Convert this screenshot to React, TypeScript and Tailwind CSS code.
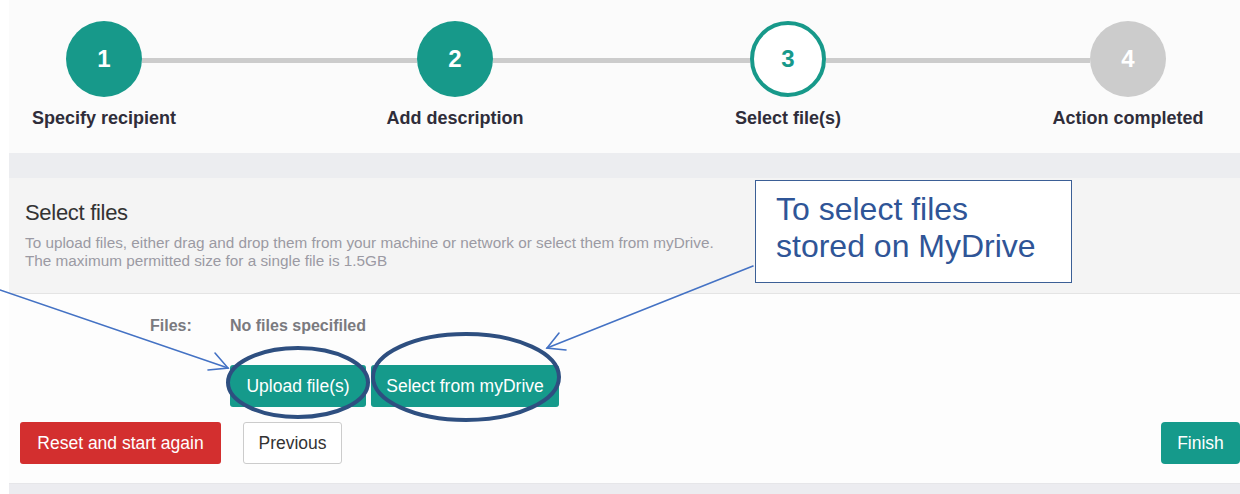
import React from "react";

type StepState = "done" | "current" | "todo";

const steps: { n: number; label: string; state: StepState }[] = [
  { n: 1, label: "Specify recipient", state: "done" },
  { n: 2, label: "Add description", state: "done" },
  { n: 3, label: "Select file(s)", state: "current" },
  { n: 4, label: "Action completed", state: "todo" },
];

// widths of the connector bars between consecutive step circles
const connectorWidths = ["w-[275px]", "w-[257px]", "w-[264px]"];

function StepCircle({ n, state }: { n: number; state: StepState }) {
  const base =
    "w-[76px] h-[76px] rounded-full flex items-center justify-center text-[24px] font-bold";
  if (state === "done") {
    return <div className={`${base} bg-[#17998a] text-white`}>{n}</div>;
  }
  if (state === "current") {
    return (
      <div className={`${base} bg-white border-[4px] border-[#17998a] text-[#17998a]`}>
        {n}
      </div>
    );
  }
  return <div className={`${base} bg-[#cccccc] text-white`}>{n}</div>;
}

function Stepper() {
  return (
    <div className="h-[153px] bg-[#fbfbfb] pt-[21px] pl-[57px]">
      <div className="flex items-start">
        {steps.map((s, i) => (
          <React.Fragment key={s.n}>
            <div className="w-[76px] flex flex-col items-center">
              <StepCircle n={s.n} state={s.state} />
              <div className="mt-[10px] whitespace-nowrap text-[18px] leading-[22px] font-bold text-[#2f2d3a]">
                {s.label}
              </div>
            </div>
            {i < connectorWidths.length && (
              <div className={`${connectorWidths[i]} h-[5px] mt-[37px] bg-[#cccccc]`} />
            )}
          </React.Fragment>
        ))}
      </div>
    </div>
  );
}

function Overlay() {
  return (
    <svg
      className="absolute inset-0 pointer-events-none"
      width={1240}
      height={494}
      viewBox="0 0 1240 494"
    >
      {/* arrow towards the upload button */}
      <g stroke="#4472c4" strokeWidth={1.6} fill="none" strokeLinecap="round">
        <line x1={0} y1={290} x2={228} y2={368} />
        <polyline points="215,353 228,368 208,370" />
        {/* arrow from the note towards the myDrive button */}
        <line x1={753} y1={266} x2={547} y2={348} />
        <polyline points="559,333 547,348 566,350" />
      </g>
      {/* rings around the two file buttons */}
      <g stroke="#2e4f80" strokeWidth={4} fill="none">
        <ellipse cx={298} cy={382.5} rx={70} ry={34.5} />
        <ellipse cx={466} cy={377} rx={93} ry={43} />
      </g>
    </svg>
  );
}

export default function App() {
  return (
    <div className="relative w-[1240px] h-[494px] overflow-hidden bg-white font-['Liberation_Sans',Arial,sans-serif]">
      <div className="ml-[9px] flex flex-col h-full">
        <Stepper />
        <div className="h-[25px] bg-[#ecedf0]" />

        {/* heading panel */}
        <div className="h-[116px] bg-[#f4f4f4] border-b border-[#e4e4e4] pl-[16px] pt-[22px]">
          <h2 className="text-[22px] leading-[26px] text-[#333] tracking-[-0.3px]">Select files</h2>
          <p className="mt-[8px] text-[15.3px] leading-[18px] text-[#9b9aa3]">
            To upload files, either drag and drop them from your machine or network or select them from myDrive.
            <br />
            The maximum permitted size for a single file is 1.5GB
          </p>
        </div>

        {/* file chooser and wizard buttons */}
        <div className="h-[190px] bg-[#fdfdfd] border-b border-[#e6e6e9] pt-[23px]">
          <div className="flex pl-[141px] text-[16px] leading-[18px] font-bold text-[#7a7a7f]">
            <span className="w-[80px]">Files:</span>
            <span>No files specifiled</span>
          </div>
          <div className="mt-[30px] pl-[221px] flex gap-[5px]">
            <button className="h-[42px] w-[136px] rounded-[3px] bg-[#159a8b] text-white text-[17.5px]">
              Upload file(s)
            </button>
            <button className="h-[42px] w-[188px] rounded-[3px] bg-[#159a8b] text-white text-[17.5px]">
              Select from myDrive
            </button>
          </div>
          <div className="mt-[15px] pl-[11px] flex items-center">
            <button className="h-[42px] w-[201px] rounded-[3px] bg-[#d32f2f] text-white text-[17.5px]">
              Reset and start again
            </button>
            <button className="ml-[22px] h-[42px] w-[99px] rounded-[3px] bg-white border border-[#cccccc] text-[#333] text-[17.5px]">
              Previous
            </button>
            <button className="ml-auto h-[42px] w-[79px] rounded-[4px] bg-[#159a8b] text-white text-[17.5px]">
              Finish
            </button>
          </div>
        </div>
        <div className="flex-1 bg-[#ececf0]" />
      </div>

      <Overlay />

      {/* callout note */}
      <div className="absolute left-[755px] top-[180px] w-[317px] h-[103px] bg-white border border-[#3b5f96] pl-[20px] pt-[10px] text-[32px] leading-[37px] text-[#2f5597]">
        To select files
        <br />
        stored on MyDrive
      </div>
    </div>
  );
}
